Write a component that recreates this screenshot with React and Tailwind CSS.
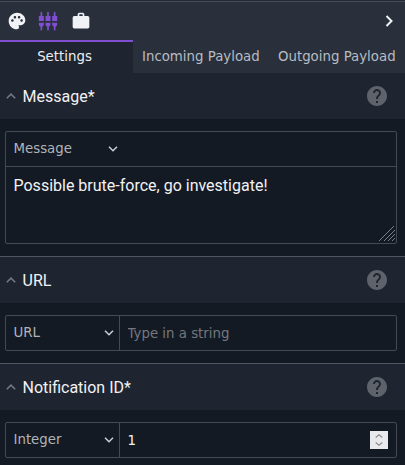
import { MdPalette, MdSettingsInputComponent, MdWork, MdHelp } from 'react-icons/md';

function Chevron({ up, className }) {
  return (
    <svg className={className} width="10" height="6" viewBox="0 0 10 6" fill="none" stroke="currentColor" strokeWidth="1.5">
      <path d={up ? 'M0.8 5.3L5 1.1L9.2 5.3' : 'M1 0.8L5 4.8L9 0.8'} />
    </svg>
  );
}

function SectionHeader({ title }) {
  return (
    <div className="flex h-[46px] items-center bg-[#1f2530] pl-[5.5px] pr-4">
      <Chevron up className="shrink-0 text-[#747981]" />
      <h2 className="ml-[7px] flex-1 pt-[2px] text-base leading-6 text-[#f1f2f5]">{title}</h2>
      <MdHelp className="size-6 text-[#5e636b]" />
    </div>
  );
}

function TypeSelect({ label, className }) {
  return (
    <button className={'flex h-[34px] shrink-0 items-center justify-between pl-[7.5px] text-left font-["DejaVu_Sans",sans-serif] text-[13.333px] text-[#b0b4ba] ' + className}>
      <span>{label}</span>
      <Chevron className="text-[#cdd0d5]" />
    </button>
  );
}

export default function App() {
  return (
    <div className="h-[465px] w-[405px] overflow-hidden bg-[#141a24] font-[Roboto,sans-serif]">
      <div className="h-10 border-t border-[#242a34] bg-[#29303b] text-[#f1f2f5]">
        <div className="flex h-full items-center gap-3 border-t border-[#464c55] pl-[7px] pr-3">
          <MdPalette className="size-5" />
          <MdSettingsInputComponent className="-ml-px mr-px size-5 text-[#804fd1]" />
          <MdWork className="size-5" />
          <svg className="ml-auto" width="8" height="14" viewBox="0 0 8 14" fill="none" stroke="currentColor" strokeWidth="2">
            <path d="M1.5 2L6.5 7L1.5 12" />
          </svg>
        </div>
      </div>
      <nav className="flex h-[33px] bg-[#29303b] font-['DejaVu_Sans',sans-serif] text-[13.333px] text-[#b8bcc3]">
        <div className="flex w-[133px] justify-center border-t-2 border-[#804fd1] bg-[#1f2530] pr-1 pt-[5px] text-[#eceef1]">Settings</div>
        <div className="w-[136px] whitespace-nowrap pl-[9px] pt-[7px]">Incoming Payload</div>
        <div className="flex-1 whitespace-nowrap pl-[9px] pt-[7px]">Outgoing Payload</div>
      </nav>

      <SectionHeader title="Message*" />
      <div className="px-[5px] pb-3 pt-3">
        <div className="w-[392px] rounded-[2px] border border-[#444a53]">
          <div className="border-b border-[#444a53]">
            <TypeSelect label="Message" className="w-[112px]" />
          </div>
          <div className="flex h-[76px] items-start justify-between pl-[7.5px] pt-[7px]">
            <p className="text-base leading-6 text-[#f1f2f5]">Possible brute-force, go investigate!</p>
            <svg className="self-end" width="17" height="17" viewBox="0 0 17 17" fill="none" stroke="#7b8087" strokeWidth="1">
              <path d="M0 15L16 -1M5 15L16 4M9 15L16 8M13 15L16 12" />
            </svg>
          </div>
        </div>
      </div>

      <div className="border-t border-[#50565e]">
        <SectionHeader title="URL" />
        <div className="px-[5px] pb-3 pt-3">
          <div className="flex w-[392px] rounded-[2px] border border-[#444a53]">
            <TypeSelect label="URL" className="w-[114px] border-r border-[#444a53] pr-[5px]" />
            <input className="w-0 flex-1 pl-[7.5px] pt-[2px] font-['DejaVu_Sans',sans-serif] text-[13.333px] text-[#f1f2f5] outline-none placeholder:text-[#73777f]" placeholder="Type in a string" />
          </div>
        </div>
      </div>

      <div className="border-t border-[#50565e]">
        <SectionHeader title="Notification ID*" />
        <div className="px-[5px] pt-3">
          <div className="flex w-[392px] items-center rounded-[2px] border border-[#444a53]">
            <TypeSelect label="Integer" className="w-[114px] border-r border-[#444a53] pr-[5px]" />
            <span className="flex-1 pl-[7.5px] pt-[2px] font-['DejaVu_Sans',sans-serif] text-[13.333px] text-[#f1f2f5]">1</span>
            <div className="mr-2 flex h-[18px] w-[18px] flex-col items-center justify-between bg-[#e9e9ed] py-[3px]">
              <svg width="8" height="4" viewBox="0 0 8 4" fill="none" stroke="#909096" strokeWidth="1.3"><path d="M0.7 3.5L4 0.8L7.3 3.5" /></svg>
              <svg width="8" height="4" viewBox="0 0 8 4" fill="none" stroke="#909096" strokeWidth="1.3"><path d="M0.7 0.5L4 3.2L7.3 0.5" /></svg>
            </div>
          </div>
        </div>
      </div>
    </div>
  );
}
